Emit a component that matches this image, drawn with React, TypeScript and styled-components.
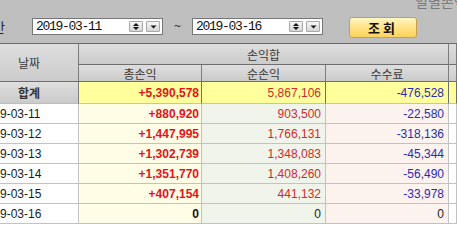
import React from "react";
import styled, { createGlobalStyle } from "styled-components";

const GlobalStyle = createGlobalStyle`
    html, body {
        margin: 0;
        padding: 0;
        background: #fff;
        overflow: hidden;
    }
`;

const KR = `"Noto Sans CJK KR", "Noto Sans", sans-serif`;
const NUM = `"Liberation Sans", Arial, sans-serif`;

// the grid is scrolled a little to the right in the original
const Page = styled.div`
    width: 477px;
    margin-left: -20px;
    font-family: ${NUM};
`;

//━━━━━━━━━━━━━━━━━━━━━━━━━━━━━━━━━━━━
const TopBar = styled.div`
    height: 43px;
    background: #bfbfbf;
    border-bottom: 1px solid #6a6a6a;
    display: flex;
    flex-direction: column;
    overflow: hidden;
`;

const Title = styled.div`
    margin-top: -6px;
    height: 14px;
    padding-left: 435px;
    font-family: ${KR};
    font-size: 14px;
    line-height: 14px;
    color: #7a7a7a;
    white-space: nowrap;
`;

const Controls = styled.div`
    display: flex;
    align-items: flex-start;
    margin-top: 9px;
`;

const Label = styled.span`
    width: 25px;
    margin-right: 27px;
    margin-top: 1px;
    text-align: right;
    font-family: ${KR};
    font-size: 13px;
    line-height: 17px;
    color: #222;
    white-space: nowrap;
    overflow: visible;
    direction: rtl;
`;

const DateBox = styled.div`
    box-sizing: border-box;
    width: 131px;
    height: 17px;
    margin-top: 1px;
    border: 1px solid #777;
    background: #fff;
    display: flex;
    align-items: center;
    padding-left: 3px;
    padding-right: 2px;
`;

const DateText = styled.span`
    flex: 1;
    font-family: "Liberation Mono", monospace;
    font-size: 13px;
    letter-spacing: -1.3px;
    line-height: 15px;
    color: #111;
`;

const SpinButton = styled.span<{ $gap?: boolean }>`
    box-sizing: border-box;
    width: 14px;
    height: 11px;
    margin-left: ${(p) => (p.$gap ? "3px" : "0")};
    border: 1px solid #a8a8a8;
    border-radius: 1px;
    background: linear-gradient(#f6f6f6, #d6d6d6);
    display: flex;
    align-items: center;
    justify-content: center;
`;

const Tilde = styled.span`
    width: 29px;
    text-align: center;
    margin-top: 1px;
    font-family: ${NUM};
    font-size: 12px;
    line-height: 17px;
    color: #333;
`;

const SearchButton = styled.button`
    box-sizing: border-box;
    width: 68px;
    height: 21px;
    margin-left: 26px;
    padding: 0;
    border: 1px solid #c6a04c;
    border-radius: 3px;
    background: linear-gradient(#fff6c4, #ffe07a 60%, #fcd35e);
    font-family: ${KR};
    font-weight: bold;
    font-size: 13px;
    letter-spacing: 3px;
    color: #111;
    line-height: 19px;
`;

//━━━━━━━━━━━━━━━━━━━━━━━━━━━━━━━━━━━━
const Grid = styled.div`
    display: grid;
    grid-template-columns: 99px 123px 124px 123px 1fr;
    grid-template-rows: 21px 17px 22px repeat(6, 20px);
`;

const HeadCell = styled.div<{ $col?: string; $row?: string }>`
    box-sizing: border-box;
    grid-column: ${(p) => p.$col ?? "auto"};
    grid-row: ${(p) => p.$row ?? "auto"};
    background: linear-gradient(#dedede, #cbcbcb);
    border-right: 1px solid #7c7c7c;
    border-bottom: 1px solid #6e6e6e;
    display: flex;
    align-items: center;
    justify-content: center;
    font-family: ${KR};
    font-size: 12px;
    color: #3a3a3a;
    white-space: nowrap;
    overflow: hidden;
`;

const SumLabel = styled(HeadCell)`
    font-weight: bold;
    color: #333;
    border-bottom: 1px solid #bdbdbd;
`;

type Tone = "total" | "net" | "fee" | "blank";

const toneBg: Record<Tone, string> = {
    total: "#fffde6",
    net: "#f1f4ea",
    fee: "#fcf3ef",
    blank: "#fff",
};

const Cell = styled.div<{ $tone: Tone; $color: string; $bold?: boolean }>`
    box-sizing: border-box;
    background: ${(p) => toneBg[p.$tone]};
    border-right: 1px solid #c2c2c2;
    border-bottom: 1px solid #c2c2c2;
    display: flex;
    align-items: center;
    justify-content: flex-end;
    padding-right: ${(p) => (p.$tone === "total" ? "2px" : "4px")};
    font-family: ${NUM};
    font-size: 12px;
    font-weight: ${(p) => (p.$bold ? "bold" : "normal")};
    color: ${(p) => p.$color};
    white-space: nowrap;
`;

const SumCell = styled(Cell)`
    background: #ffff9c;
    border-right: 1px solid #6e6e6e;
`;

const DateCell = styled.div`
    box-sizing: border-box;
    background: #fff;
    border-right: 1px solid #c2c2c2;
    border-bottom: 1px solid #c2c2c2;
    display: flex;
    align-items: center;
    padding-left: 0;
    font-family: ${NUM};
    font-size: 12px;
    color: #1a1a1a;
`;

const SpinIcon = () => (
    <svg width="8" height="9" viewBox="0 0 8 9">
        <polygon points="1,4 4,1 7,4" fill="#111" />
        <polygon points="1,5 4,8 7,5" fill="#111" />
    </svg>
);

const DropIcon = () => (
    <svg width="7" height="4" viewBox="0 0 7 4">
        <polygon points="0.5,0.5 6.5,0.5 3.5,3.5" fill="#111" />
    </svg>
);

const DateInput = ({ value }: { value: string }) => (
    <DateBox>
        <DateText>{value}</DateText>
        <SpinButton>
            <SpinIcon />
        </SpinButton>
        <SpinButton $gap>
            <DropIcon />
        </SpinButton>
    </DateBox>
);

type Row = { date: string; total: number; net: number; fee: number };

const rows: Row[] = [
    { date: "2019-03-11", total: 880920, net: 903500, fee: -22580 },
    { date: "2019-03-12", total: 1447995, net: 1766131, fee: -318136 },
    { date: "2019-03-13", total: 1302739, net: 1348083, fee: -45344 },
    { date: "2019-03-14", total: 1351770, net: 1408260, fee: -56490 },
    { date: "2019-03-15", total: 407154, net: 441132, fee: -33978 },
    { date: "2019-03-16", total: 0, net: 0, fee: 0 },
];

const fmt = (n: number) => n.toLocaleString("en-US");
const signed = (n: number) => (n > 0 ? "+" + fmt(n) : fmt(n));

function App() {
    return (
        <>
            <GlobalStyle />
            <Page>
                <TopBar>
                    <Title>일별손익현황</Title>
                    <Controls>
                        <Label>조회기간</Label>
                        <DateInput value="2019-03-11" />
                        <Tilde>~</Tilde>
                        <DateInput value="2019-03-16" />
                        <SearchButton>조회</SearchButton>
                    </Controls>
                </TopBar>
                <Grid>
                    <HeadCell $col="1" $row="1 / 3">날짜</HeadCell>
                    <HeadCell $col="2 / 5" $row="1">손익합</HeadCell>
                    <HeadCell $col="5" $row="1" />
                    <HeadCell $col="2" $row="2">총손익</HeadCell>
                    <HeadCell $col="3" $row="2">순손익</HeadCell>
                    <HeadCell $col="4" $row="2">수수료</HeadCell>
                    <HeadCell $col="5" $row="2" />

                    <SumLabel>합계</SumLabel>
                    <SumCell $tone="total" $color="#e3141c" $bold>+5,390,578</SumCell>
                    <SumCell $tone="net" $color="#cf2b2b">5,867,106</SumCell>
                    <SumCell $tone="fee" $color="#2b2bb0">-476,528</SumCell>
                    <SumCell $tone="blank" $color="#222" />

                    {rows.map((r) => (
                        <React.Fragment key={r.date}>
                            <DateCell>{r.date}</DateCell>
                            <Cell $tone="total" $color={r.total ? "#e3141c" : "#111"} $bold>
                                {signed(r.total)}
                            </Cell>
                            <Cell $tone="net" $color={r.net ? "#cf2b2b" : "#222"}>
                                {fmt(r.net)}
                            </Cell>
                            <Cell $tone="fee" $color={r.fee ? "#2b2bb0" : "#222"}>
                                {fmt(r.fee)}
                            </Cell>
                            <Cell $tone="blank" $color="#222" />
                        </React.Fragment>
                    ))}
                </Grid>
            </Page>
        </>
    );
}

export default App;
